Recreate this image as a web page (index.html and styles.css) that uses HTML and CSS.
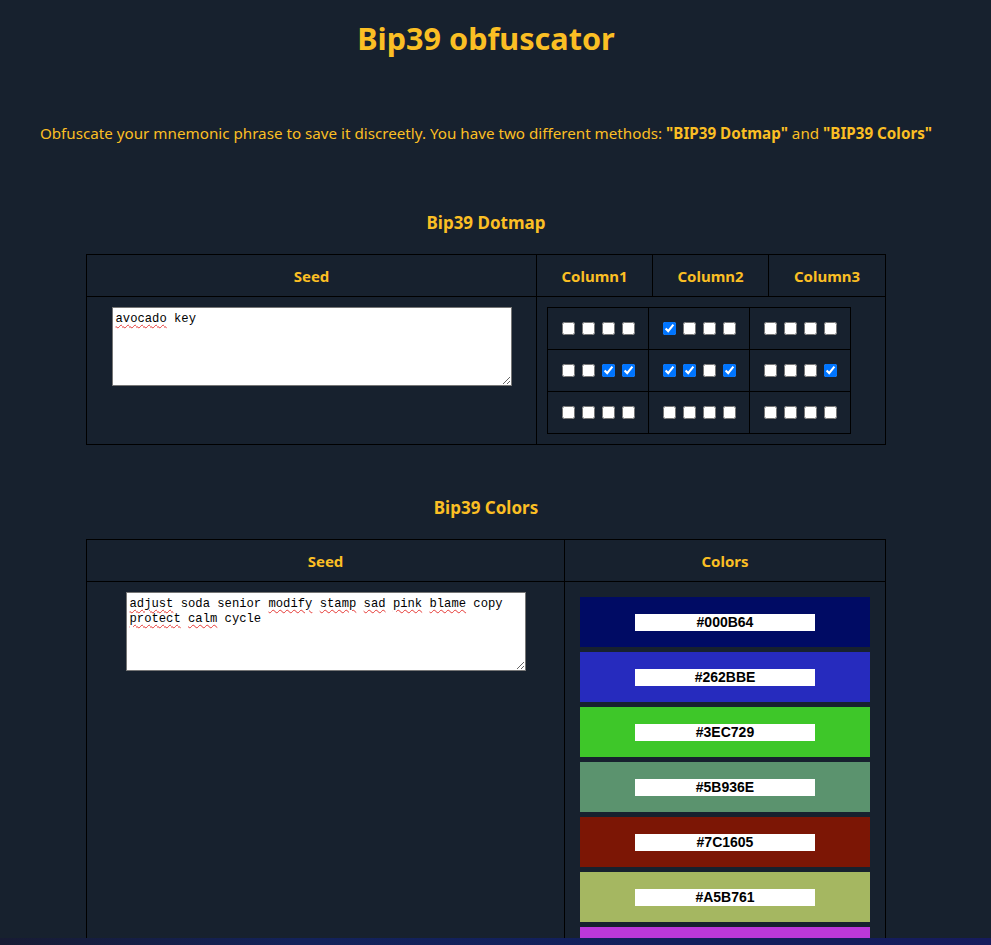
FILE: index.html
```html
<!DOCTYPE html>
<html lang="en">
<head>
<meta charset="utf-8">
<title>Bip39 obfuscator</title>
<link rel="stylesheet" href="styles.css">
</head>
<body>
<div class="page">
  <h1 class="title">Bip39 obfuscator</h1>
  <p class="intro">Obfuscate your mnemonic phrase to save it discreetly. You have two different methods: <b>"BIP39 Dotmap"</b> and <b>"BIP39 Colors"</b></p>

  <h2 class="section-title">Bip39 Dotmap</h2>
  <table class="grid dotmap">
    <thead>
      <tr>
        <th class="seed-col-1">Seed</th>
        <th class="c1">Column1</th>
        <th class="c2">Column2</th>
        <th class="c3">Column3</th>
      </tr>
    </thead>
    <tbody>
      <tr>
        <td class="seed-cell"><div class="seed-box"><span class="typo">avocado</span> key</div></td>
        <td class="dots-cell" colspan="3">
          <table class="dots">
            <tr>
              <td><div class="boxes"><input type="checkbox"><input type="checkbox"><input type="checkbox"><input type="checkbox"></div></td>
              <td><div class="boxes"><input type="checkbox" checked><input type="checkbox"><input type="checkbox"><input type="checkbox"></div></td>
              <td><div class="boxes"><input type="checkbox"><input type="checkbox"><input type="checkbox"><input type="checkbox"></div></td>
            </tr>
            <tr>
              <td><div class="boxes"><input type="checkbox"><input type="checkbox"><input type="checkbox" checked><input type="checkbox" checked></div></td>
              <td><div class="boxes"><input type="checkbox" checked><input type="checkbox" checked><input type="checkbox"><input type="checkbox" checked></div></td>
              <td><div class="boxes"><input type="checkbox"><input type="checkbox"><input type="checkbox"><input type="checkbox" checked></div></td>
            </tr>
            <tr>
              <td><div class="boxes"><input type="checkbox"><input type="checkbox"><input type="checkbox"><input type="checkbox"></div></td>
              <td><div class="boxes"><input type="checkbox"><input type="checkbox"><input type="checkbox"><input type="checkbox"></div></td>
              <td><div class="boxes"><input type="checkbox"><input type="checkbox"><input type="checkbox"><input type="checkbox"></div></td>
            </tr>
          </table>
        </td>
      </tr>
    </tbody>
  </table>

  <h2 class="section-title second">Bip39 Colors</h2>
  <table class="grid colors">
    <thead>
      <tr>
        <th class="seed-col-2">Seed</th>
        <th class="colors-col">Colors</th>
      </tr>
    </thead>
    <tbody>
      <tr>
        <td class="seed-cell"><div class="seed-box"><span class="typo">adjust</span> soda senior <span class="typo">modify</span> <span class="typo">stamp</span> <span class="typo">sad</span> <span class="typo">pink</span> <span class="typo">blame</span> copy <span class="typo">protect</span> <span class="typo">calm</span> cycle</div></td>
        <td class="swatch-cell">
          <div class="swatch" style="background:#000B64"><div class="code">#000B64</div></div>
          <div class="swatch" style="background:#262BBE"><div class="code">#262BBE</div></div>
          <div class="swatch" style="background:#3EC729"><div class="code">#3EC729</div></div>
          <div class="swatch" style="background:#5B936E"><div class="code">#5B936E</div></div>
          <div class="swatch" style="background:#7C1605"><div class="code">#7C1605</div></div>
          <div class="swatch" style="background:#A5B761"><div class="code">#A5B761</div></div>
          <div class="swatch" style="background:#BB38D9"></div>
        </td>
      </tr>
    </tbody>
  </table>
</div>
<div class="bottom-strip"></div>
</body>
</html>
```

FILE: styles.css
```css
html, body {
  margin: 0;
  padding: 0;
}
body {
  background: #141c3a;
  font-family: "Noto Sans", "Open Sans", sans-serif;
  color: #fbbf24;
}
.page {
  height: 938px;
  overflow: hidden;
  background: #17212e;
  padding-right: 19px;
  display: flex;
  flex-direction: column;
  align-items: center;
}
.title {
  margin: 0;
  padding-top: 18px;
  font-size: 30.6px;
  line-height: 40px;
  font-weight: 700;
  text-align: center;
}
.intro {
  margin: 65px 0 0;
  font-size: 15.2px;
  line-height: 20px;
  text-align: center;
}
.intro b {
  font-weight: 700;
}
.section-title {
  margin: 68px 0 19px;
  font-size: 17px;
  line-height: 24px;
  font-weight: 700;
  text-align: center;
}
.section-title.second {
  margin-top: 51px;
}
.grid {
  border-collapse: collapse;
  table-layout: fixed;
  width: 799px;
  flex-shrink: 0;
}
.grid th,
.grid td {
  border: 1px solid #000;
}
.grid th {
  height: 42px;
  padding: 0 10px;
  font-size: 15px;
  font-weight: 700;
  text-align: center;
  box-sizing: border-box;
}
.seed-col-1 { width: 450px; }
.c1, .c2 { width: 116px; }
.c3 { width: 117px; }
.seed-col-2 { width: 478px; }
.colors-col { width: 321px; }

.seed-cell {
  padding: 10px 0;
  vertical-align: top;
}
.seed-box {
  box-sizing: border-box;
  width: 400px;
  height: 79px;
  margin: 0 auto;
  padding: 4px 3px 2px;
  background: #fff;
  border: 1px solid #767676;
  color: #000;
  font-family: "Liberation Mono", monospace;
  font-size: 12.2px;
  line-height: 15px;
  text-align: left;
  overflow: auto;
  resize: both;
}
.typo {
  text-decoration: underline wavy #e53935;
  text-decoration-thickness: 1px;
  text-underline-offset: 2px;
}
.dots-cell {
  padding: 10px;
  vertical-align: top;
}
.dots {
  border-collapse: collapse;
}
.dots td {
  border: 1px solid #000;
  padding: 10px;
}
.boxes {
  display: flex;
  align-items: center;
  height: 21px;
}
.boxes input {
  width: 13px;
  height: 13px;
  margin: 3px 3px 3px 4px;
}
.swatch-cell {
  padding: 15px 15px 10px;
  vertical-align: top;
}
.swatch {
  width: 290px;
  height: 50px;
  margin: 0 0 5px;
  display: flex;
  align-items: center;
  justify-content: center;
}
.code {
  width: 180px;
  height: 17px;
  background: #fff;
  color: #000;
  font-family: "Liberation Sans", Arial, sans-serif;
  font-size: 14px;
  font-weight: 700;
  line-height: 17px;
  text-align: center;
}
.bottom-strip {
  height: 7px;
  background: linear-gradient(90deg, #171b33 0%, #13225a 30%, #121f5c 70%, #161b5c 100%);
}
```
